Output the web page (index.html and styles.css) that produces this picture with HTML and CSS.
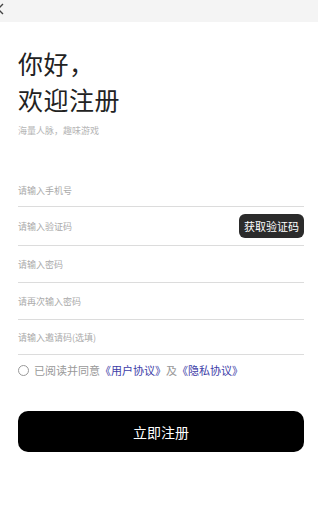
FILE: index.html
```html
<!DOCTYPE html>
<html lang="zh">
<head>
<meta charset="utf-8">
<link rel="stylesheet" href="styles.css">
</head>
<body>
<div class="topbar">
  <svg class="back" width="8" height="12" viewBox="0 0 8 12"><path d="M6 1 L1 6 L6 11" fill="none" stroke="#444" stroke-width="1.4"/></svg>
</div>
<main class="page">
  <h1 class="title">你好，<br>欢迎注册</h1>
  <p class="sub">海量人脉，趣味游戏</p>
  <form class="form">
    <div class="row first"><span class="ph">请输入手机号</span></div>
    <div class="row tall"><span class="ph">请输入验证码</span><button type="button" class="code">获取验证码</button></div>
    <div class="row"><span class="ph">请输入密码</span></div>
    <div class="row"><span class="ph">请再次输入密码</span></div>
    <div class="row last"><span class="ph">请输入邀请码(选填)</span></div>
  </form>
  <div class="agree"><span class="circle"></span><span class="gray">已阅读并同意</span><span class="link">《用户协议》</span><span class="gray">及</span><span class="link">《隐私协议》</span></div>
  <button type="button" class="submit">立即注册</button>
</main>
</body>
</html>
```
FILE: styles.css
```css
* { box-sizing: border-box; }
body {
  margin: 0;
  background: #fff;
  font-family: "Noto Sans CJK SC", "Noto Sans", sans-serif;
  width: 318px;
  height: 522px;
  overflow: hidden;
}
.topbar {
  height: 22px;
  background: #f4f4f4;
  display: flex;
  align-items: center;
}
.back { margin-left: -3px; margin-top: -4px; }
.page { padding: 0 14px 0 18px; }
.title {
  margin: 23px 0 0;
  font-size: 25px;
  font-weight: 400;
  line-height: 36px;
  color: #222;
  letter-spacing: 0.5px;
}
.sub {
  margin: 8px 0 0;
  font-size: 9px;
  line-height: 12px;
  color: #b5b5b5;
}
.form { margin-top: 34px; }
.row {
  height: 37px;
  border-bottom: 1px solid #dcdcdc;
  display: flex;
  align-items: center;
  justify-content: space-between;
}
.row.first { height: 36px; padding-top: 4px; }
.row.tall { height: 39px; }
.row.last { height: 35px; }
.ph { font-size: 9px; color: #aaa; }
.code {
  border: 0;
  background: #2b2b2b;
  color: #fff;
  font-family: inherit;
  font-size: 11px;
  height: 24px;
  padding: 0 5px;
  border-radius: 6px;
}
.agree {
  display: flex;
  align-items: center;
  height: 30px;
  font-size: 11px;
}
.circle {
  width: 11px;
  height: 11px;
  border: 1px solid #999;
  border-radius: 50%;
  margin-right: 5px;
}
.gray { color: #999; }
.link { color: #3d3da8; }
.submit {
  display: block;
  width: 286px;
  height: 41px;
  margin-top: 26px;
  border: 0;
  border-radius: 10px;
  background: #000;
  color: #fff;
  font-family: inherit;
  font-size: 14px;
}
```
